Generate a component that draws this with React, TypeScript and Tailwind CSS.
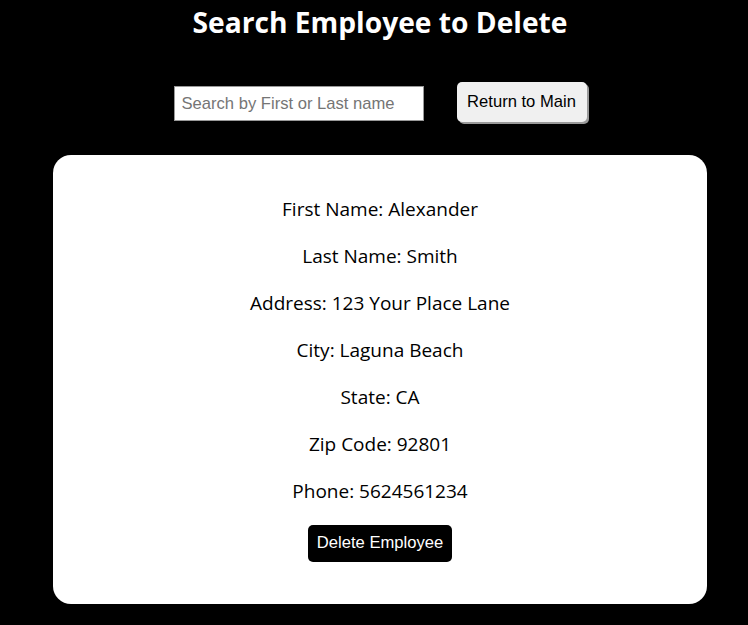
import { useState } from "react";

const employee = {
  firstName: "Alexander",
  lastName: "Smith",
  address: "123 Your Place Lane",
  city: "Laguna Beach",
  state: "CA",
  zip: "92801",
  phone: "5624561234",
};

const App = () => {
  const [search, setSearch] = useState<string>("");

  const rows = [
    `First Name: ${employee.firstName}`,
    `Last Name: ${employee.lastName}`,
    `Address: ${employee.address}`,
    `City: ${employee.city}`,
    `State: ${employee.state}`,
    `Zip Code: ${employee.zip}`,
    `Phone: ${employee.phone}`,
  ];

  return (
    <div className="min-h-[625px] bg-black pl-3 font-['Open_Sans',sans-serif]">
      <div className="flex flex-col items-center">
        <h1 className="pt-[2px] text-[28.2px] font-bold leading-[40px] text-white">
          Search Employee to Delete
        </h1>
        <div className="mt-[40px] flex items-start gap-[33px]">
          <input
            type="text"
            placeholder="Search by First or Last name"
            value={search}
            onChange={(e) => setSearch(e.target.value)}
            className="mt-[4px] h-[35px] w-[250px] border border-[#999] bg-white px-[7px] font-['Liberation_Sans',Arial,sans-serif] text-[16.6px] text-black placeholder:text-[#757575] focus:outline-none"
          />
          <button className="h-[40px] w-[130px] rounded-[5px] bg-[#f0f0f0] font-['Liberation_Sans',Arial,sans-serif] text-[16.6px] text-black shadow-[2px_2px_0_#9a9a9a]">
            Return to Main
          </button>
        </div>
        <div className="mt-[33px] flex w-[654px] flex-col items-center rounded-[18px] bg-white pt-[31px] pb-[42px]">
          {rows.map((row) => (
            <p key={row} className="text-[19px] leading-[47px] text-black">
              {row}
            </p>
          ))}
          <button className="mt-[10px] h-[37px] w-[144px] rounded-[5px] bg-black font-['Liberation_Sans',Arial,sans-serif] text-[16.6px] text-white">
            Delete Employee
          </button>
        </div>
      </div>
    </div>
  );
};

export default App;
